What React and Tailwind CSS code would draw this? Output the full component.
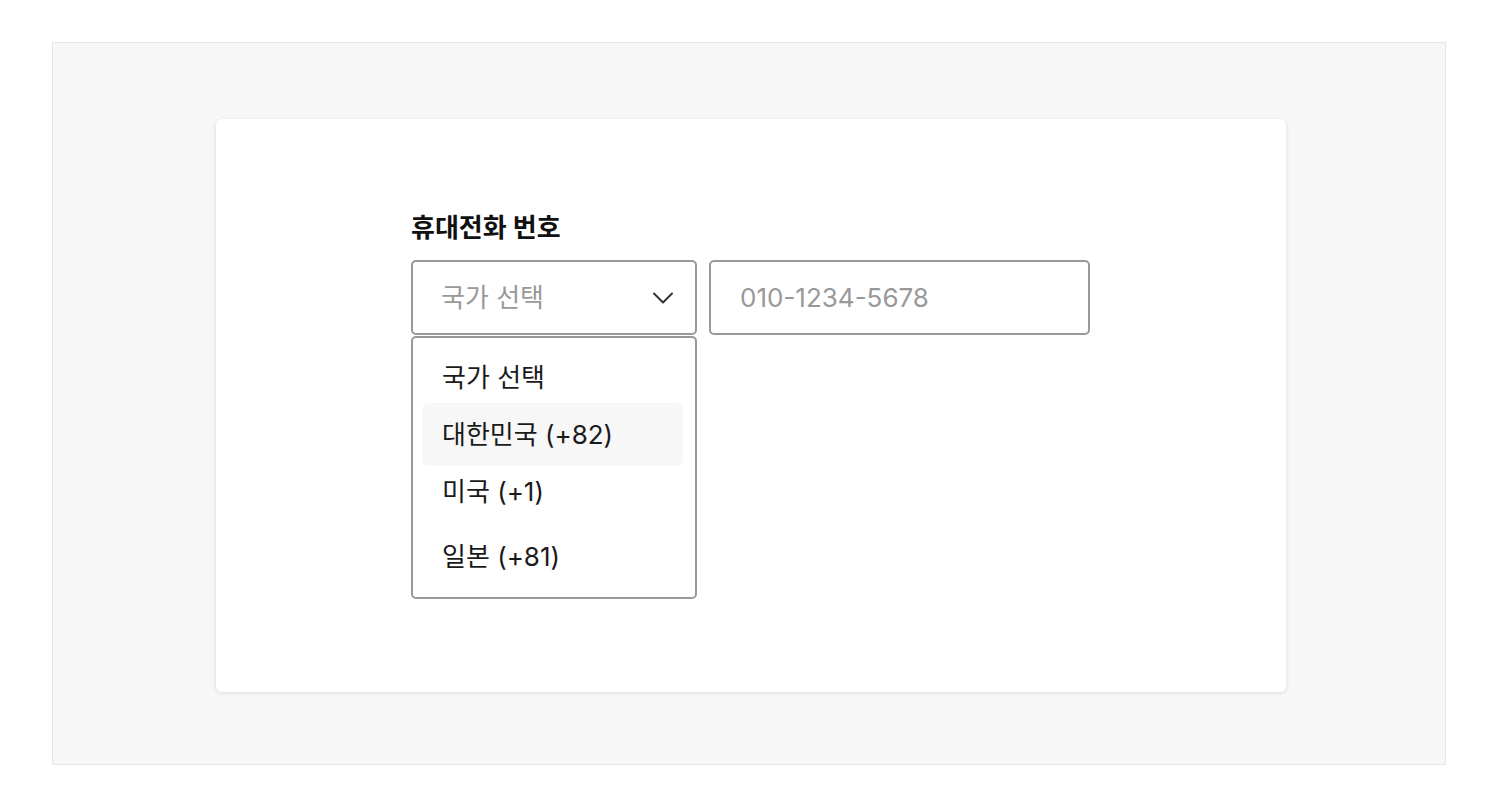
import React from "react";

const font = { fontFamily: 'Inter, "Noto Sans CJK KR", sans-serif' };

export default function App() {
  return (
    <div className="min-h-screen bg-white pt-[42px] px-[52px] pb-[47px]" style={font}>
      <div className="h-[723px] border border-[#e6e6e6] bg-[#f7f7f7] flex items-center justify-center pl-[4px] pt-[4px]">
        <div className="w-[1070px] h-[573px] bg-white rounded-[6px] shadow-[0_1px_4px_rgba(0,0,0,0.12)] pl-[195px] pt-[93px]">
          <div className="w-[679px]">
            <div className="h-[32px] leading-[32px] text-[26px] font-bold text-[#111] mb-[16px]">
              휴대전화 번호
            </div>
            <div className="flex gap-[12px]">
              <div className="relative w-[286px]">
                <div className="h-[75px] border-2 border-[#999] rounded-[5px] flex items-center justify-between pl-[28px] pr-[22px]">
                  <span className="text-[26px] text-[#999]">국가 선택</span>
                  <svg width="20" height="12" viewBox="0 0 20 12" fill="none">
                    <polyline points="1,1.5 10,10.5 19,1.5" stroke="#333" strokeWidth="2" strokeLinecap="round" strokeLinejoin="round" />
                  </svg>
                </div>
                <div className="absolute left-0 right-0 top-full mt-[1px] h-[263px] border-2 border-[#999] rounded-[5px] bg-white pl-[9px] pr-[12px] pt-[9px] text-[26px] text-[#1a1a1a]">
                  <div className="h-[56px] pt-[4px] flex items-center pl-[20px]">국가 선택</div>
                  <div className="h-[63px] flex items-center pl-[20px] bg-[#f7f7f7] rounded-[7px]">대한민국 (+82)</div>
                  <div className="h-[50px] flex items-center pl-[20px]">미국 (+1)</div>
                  <div className="h-[72px] pt-[8px] flex items-center pl-[20px]">일본 (+81)</div>
                </div>
              </div>
              <input
                className="w-[381px] h-[75px] border-2 border-[#999] rounded-[5px] pl-[29px] text-[26px] text-[#222] placeholder:text-[#999] outline-none"
                placeholder="010-1234-5678"
                style={font}
              />
            </div>
          </div>
        </div>
      </div>
    </div>
  );
}
